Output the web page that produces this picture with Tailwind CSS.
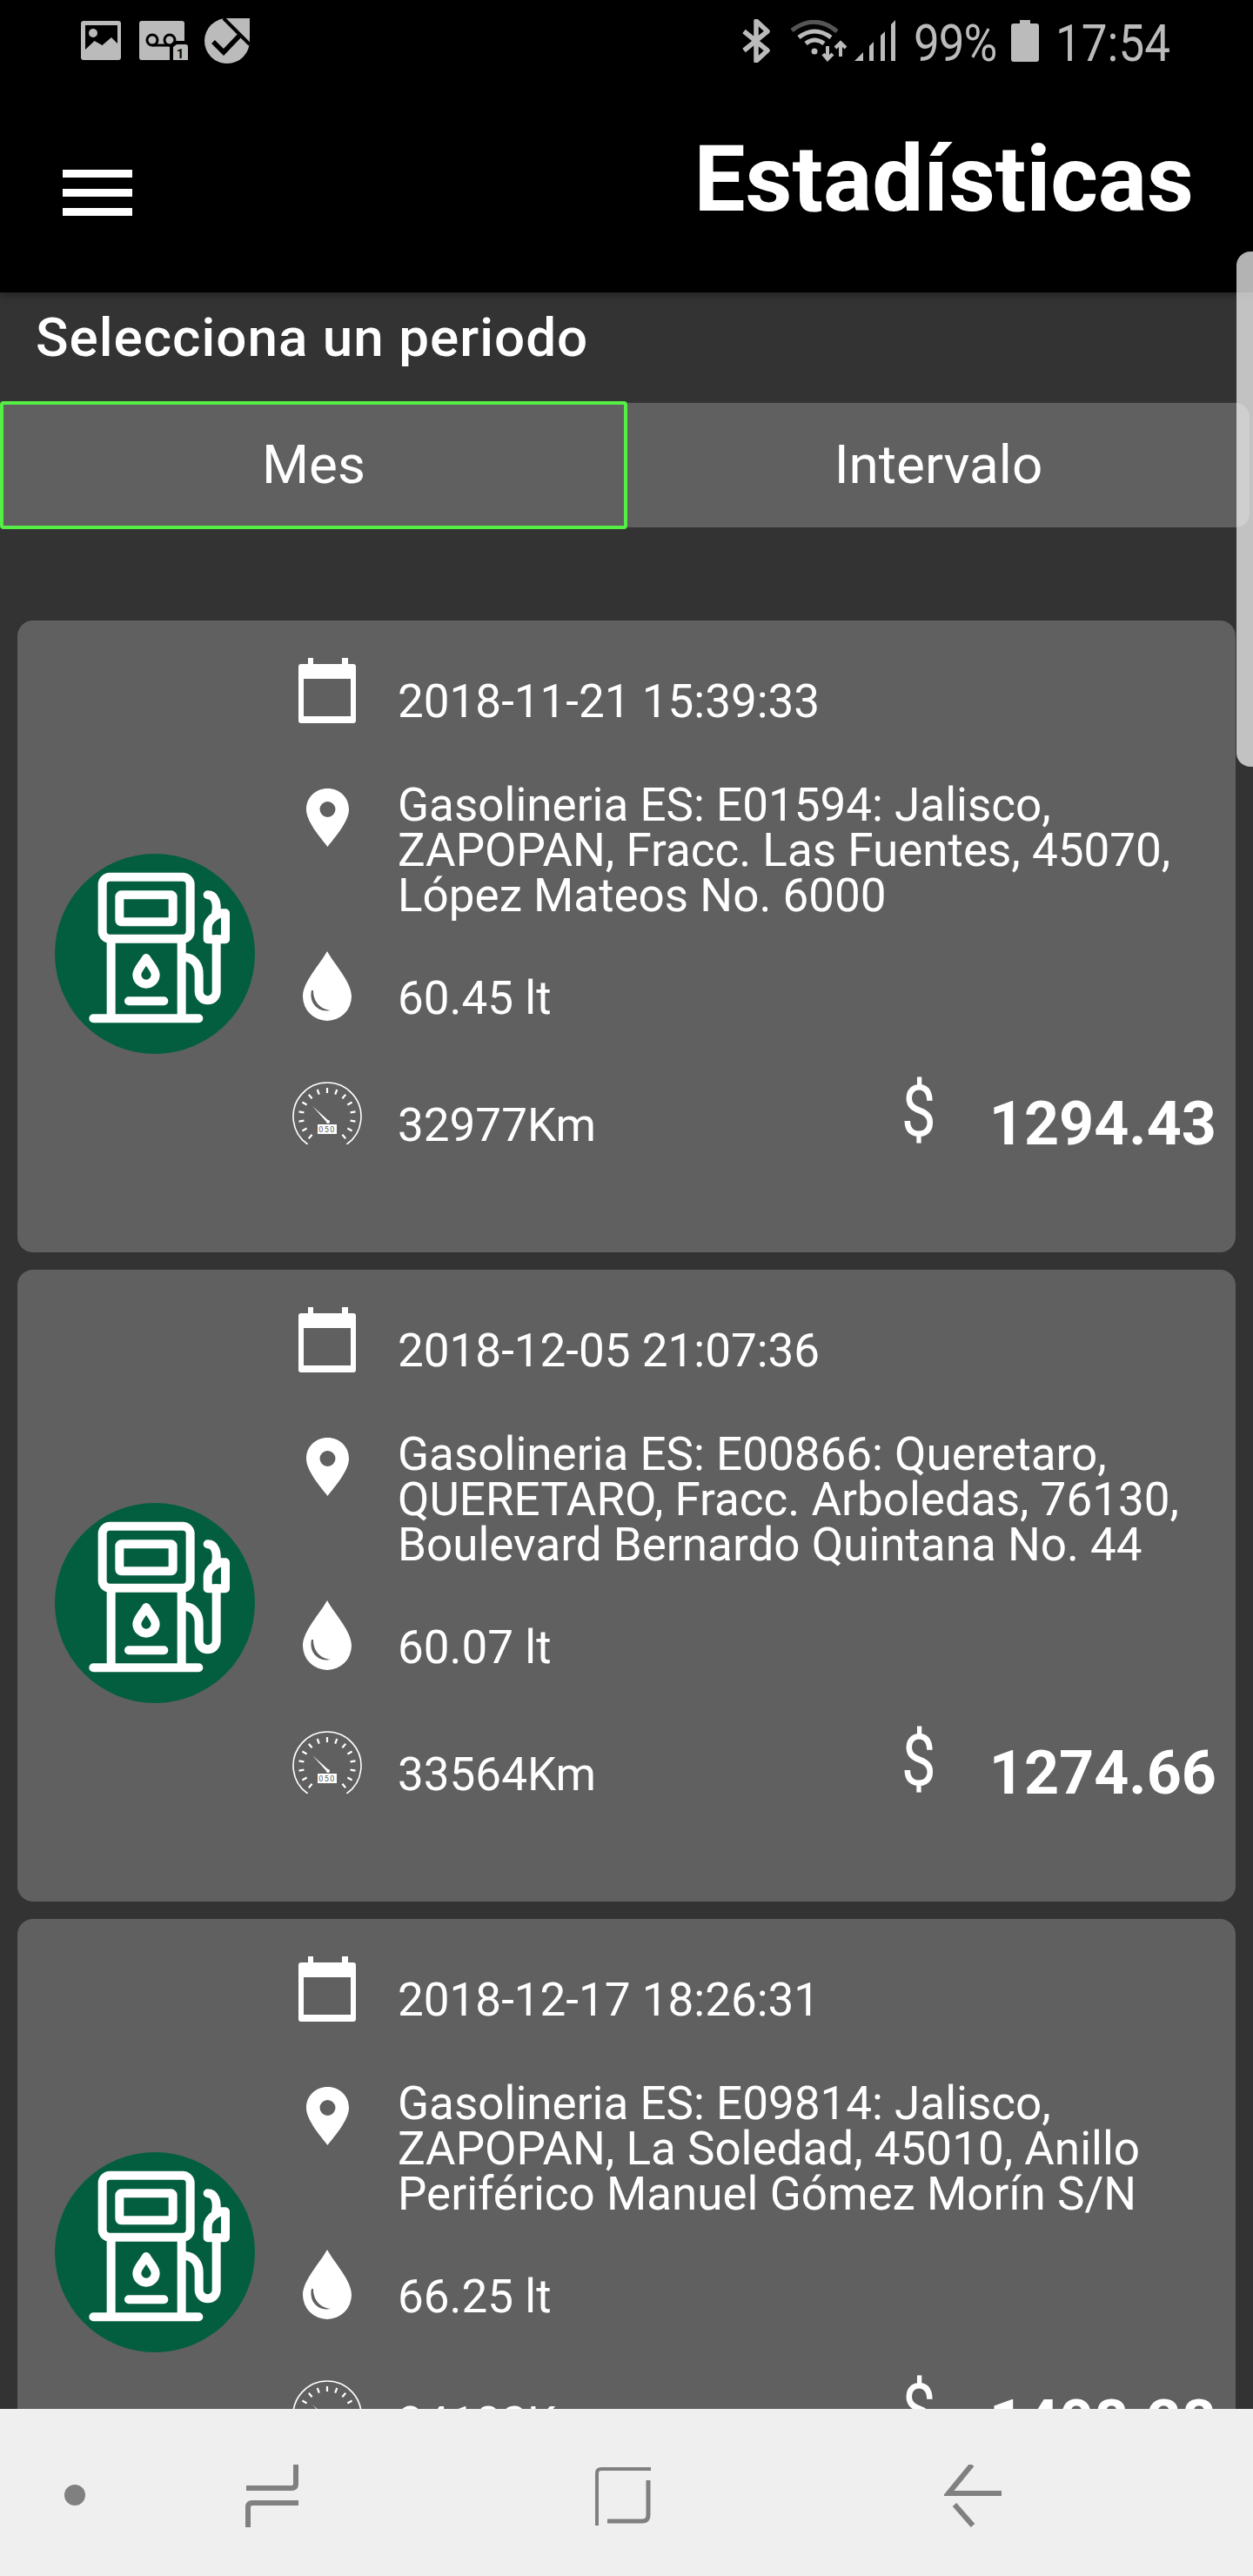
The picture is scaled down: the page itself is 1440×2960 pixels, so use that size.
<!DOCTYPE html>
<html lang="es">
<head>
  <meta charset="UTF-8">
  <title>Estadísticas</title>
  <script src="https://cdn.jsdelivr.net/npm/@tailwindcss/browser@4"></script>
</head>
<body class="bg-[#333333] font-['Roboto',sans-serif] text-white">
  <!-- iconos compartidos -->
  <svg class="hidden">
    <symbol id="calendar" viewBox="0 0 66 75">
      <path fill="#fff" fill-rule="evenodd" d="M3 7h8V0h6v7h33V0h7v7h6a3 3 0 0 1 3 3v62a3 3 0 0 1-3 3H3a3 3 0 0 1-3-3V10a3 3 0 0 1 3-3zM6 24v43h54V24z"/>
    </symbol>
    <symbol id="pin" viewBox="0 0 49 67">
      <path fill="#fff" fill-rule="evenodd" d="M24.5 0C38 0 49 10 49 24 49 38 33 56 24.5 67 16 56 0 38 0 24 0 10 11 0 24.5 0zM24.5 15a9 9 0 1 0 0 18 9 9 0 0 0 0-18z"/>
    </symbol>
    <symbol id="drop" viewBox="0 0 56 80">
      <path fill="#fff" d="M28 0C20 15 0 35 0 52a28 28 0 0 0 56 0C56 35 36 15 28 0z"/>
      <path fill="#606060" d="M10 45C7 58 16 71 32 68 22 67 12 60 12 45z"/>
    </symbol>
    <symbol id="gauge" viewBox="0 0 80 72">
      <path fill="none" stroke="#fff" stroke-width="1.6" d="M17.7 72A39 39 0 1 1 62.3 72"/>
      <path fill="none" stroke="#fff" stroke-width="2.2" d="M40 13V7M49.2 14.6L51.3 9M30.8 14.6L28.7 9M57.4 19.3L61.2 14.7M22.6 19.3L18.8 14.7M63.4 26.5L68.6 23.5M16.6 26.5L11.4 23.5M66.6 35.3L72.5 34.3M13.4 35.3L7.5 34.3M66.6 44.7L72.5 45.7M13.4 44.7L7.5 45.7M63.4 53.5L68.6 56.5M16.6 53.5L11.4 56.5M57.4 60.7L61.2 65.3M22.6 60.7L18.8 65.3"/>
      <path fill="#fff" d="M23 28L42 45 40 47z"/>
      <circle cx="41" cy="46" r="2" fill="#fff"/>
      <rect x="29" y="49" width="22" height="11" fill="#fff"/>
      <text x="40" y="58" text-anchor="middle" font-size="9" letter-spacing="1.4" fill="#606060" font-family="Roboto">050</text>
    </symbol>
    <symbol id="pump" viewBox="70 65 690 690">
      <g fill="none" stroke="#fff" stroke-width="30" stroke-linecap="round" stroke-linejoin="round">
        <rect x="234" y="145" width="303" height="213" rx="26"/>
        <rect x="293" y="207" width="184" height="93" rx="6"/>
        <path d="M264 360V632M507 360V632M203 633H566M325 573H446"/>
        <path d="M385 425C370 450 353 465 353 482A32 32 0 0 0 417 482C417 465 400 450 385 425Z"/>
        <path d="M522 423C550 425 567 450 567 480V540A30 30 0 0 0 627 540V360"/>
        <path d="M597 360V320C597 295 620 280 640 270H658V360Z"/>
        <path d="M597 207C622 207 632 235 625 270"/>
      </g>
    </symbol>
  </svg>

  <div class="relative w-[1440px] h-[2960px] overflow-hidden flex flex-col">
    <!-- barra de estado + titulo -->
    <header class="h-[336px] shrink-0 bg-black shadow-[0_4px_8px_rgba(0,0,0,0.3)] z-10">
      <div class="flex justify-between items-start h-[72px] pt-[21px] pl-[93px] pr-[98px]">
        <div class="flex items-start gap-[21px]">
          <svg class="w-[46px] h-[45px] mt-[3px]" viewBox="0 0 46 45">
            <rect width="46" height="45" rx="3" fill="#bbb"/>
            <path fill="#000" d="M5 5H42V26L35 19 24.5 28 15.5 23 5 33Z"/>
            <circle cx="14" cy="14" r="5" fill="#bbb"/>
          </svg>
          <svg class="w-[56px] h-[45px] mt-[3px] -mr-[2px]" viewBox="0 0 56 45">
            <rect width="52" height="45" rx="3" fill="#bbb"/>
            <circle cx="15" cy="22" r="6" fill="none" stroke="#000" stroke-width="3"/>
            <circle cx="35" cy="22" r="6" fill="none" stroke="#000" stroke-width="3"/>
            <path d="M15 28H35" stroke="#000" stroke-width="3"/>
            <path d="M35 45V28L40 23H56V45Z" fill="#000"/>
            <path d="M39 45V30L43 27H53A3 3 0 0 1 56 30V45Z" fill="#bbb"/>
            <text x="47" y="43" text-anchor="middle" font-size="15" font-weight="700" fill="#000" font-family="Roboto">1</text>
          </svg>
          <svg class="w-[52px] h-[52px]" viewBox="0 0 52 52">
            <circle cx="26" cy="26" r="26" fill="#bbb"/>
            <path d="M27 0H52V24Z" fill="#bbb"/>
            <path d="M22 0L52 30" stroke="#000" stroke-width="4"/>
            <path d="M10 27L22 39 42 18" fill="none" stroke="#000" stroke-width="5.5"/>
          </svg>
        </div>
        <div class="flex items-start text-[#bbbbbb]">
          <svg class="w-[32px] h-[50px] mt-[1px]" viewBox="0 0 32 50">
            <path d="M2 36L29 14 16 2V48L29 36 2 14" fill="none" stroke="#bbb" stroke-width="5.5" stroke-linejoin="round"/>
          </svg>
          <svg class="w-[66px] h-[48px] ml-[24px] mt-[2px]" viewBox="0 0 66 48">
            <g fill="none" stroke-width="5">
              <path stroke="#555" d="M1 12Q27-8 53 13"/>
              <path stroke="#bbb" d="M9 20Q27 6 46 20"/>
              <path stroke="#bbb" d="M17 27Q27 19 38 27"/>
              <path stroke="#bbb" stroke-width="4" d="M42 30V43M37 39L42 45 48 39M57 42V27M51 32L57 26 63 32"/>
            </g>
            <circle cx="27" cy="36" r="3.5" fill="#bbb"/>
          </svg>
          <svg class="w-[48px] h-[48px] ml-[7px] mt-[2px]" viewBox="0 0 48 48">
            <path fill="#bbb" d="M0 47L10 37V47ZM17 30L22 25V47H17ZM30 18L35 13V47H30ZM42 5L47 0V47H42Z"/>
          </svg>
          <span class="text-[53px] leading-[52px] ml-[20px] mt-[3px] w-[94px] origin-left scale-y-[1.12] tracking-[-1px] whitespace-nowrap">99%</span>
          <svg class="w-[32px] h-[48px] ml-[18px] mt-[2px]" viewBox="0 0 32 48">
            <path fill="#bbb" d="M10 0H22V4H29A3 3 0 0 1 32 7V45A3 3 0 0 1 29 48H3A3 3 0 0 1 0 45V7A3 3 0 0 1 3 4H10Z"/>
          </svg>
          <span class="text-[53px] leading-[52px] ml-[19px] mt-[3px] w-[129px] scale-y-[1.12] whitespace-nowrap">17:54</span>
        </div>
      </div>
      <div class="flex justify-between items-start pl-[72px] pr-[68px]">
        <div class="flex flex-col gap-[13px] mt-[123px]">
          <span class="block w-[80px] h-[9px] bg-white"></span>
          <span class="block w-[80px] h-[9px] bg-white"></span>
          <span class="block w-[80px] h-[9px] bg-white"></span>
        </div>
        <h1 class="text-[105px] leading-[105px] font-bold mt-[82px]">Estadísticas</h1>
      </div>
    </header>

    <main class="flex-1 min-h-0 overflow-hidden">
      <p class="pl-[41px] pt-[22px] text-[62px] leading-[60px] font-medium tracking-[1px]">Selecciona un periodo</p>

      <div class="flex mt-[43px] h-[147px] items-center">
        <button class="w-[721px] h-[147px] pb-[2px] bg-[#606060] border-[4px] border-[#55ee44] rounded-[4px] text-[62px]">Mes</button>
        <button class="w-[715px] h-[143px] pb-[2px] bg-[#606060] rounded-r-[16px] text-[62px]">Intervalo</button>
      </div>

      <div class="flex flex-col gap-[20px] mt-[105px] px-[20px]">
        <article class="flex h-[726px] bg-[#606060] rounded-[18px] pl-[43px]">
          <div class="w-[230px] h-[230px] shrink-0 mt-[268px] rounded-full bg-[#035e3f] flex items-center justify-center">
            <svg class="w-[230px] h-[230px]"><use href="#pump"/></svg>
          </div>
          <div class="flex-1 ml-[43px] pt-[2px] pr-[22px] text-[53px] leading-[52px]">
            <div class="flex items-center h-[182px]">
              <div class="w-[80px] flex justify-center"><svg class="w-[66px] h-[75px] mb-[26px]"><use href="#calendar"/></svg></div>
              <span class="ml-[41px]">2018-11-21 15:39:33</span>
            </div>
            <div class="flex items-center h-[160px]">
              <div class="w-[80px] flex justify-center"><svg class="w-[49px] h-[67px] mb-[76px]"><use href="#pin"/></svg></div>
              <span class="ml-[41px] flex-1">Gasolineria ES: E01594: Jalisco, ZAPOPAN, Fracc. Las Fuentes, 45070, López Mateos No. 6000</span>
            </div>
            <div class="flex items-center h-[180px]">
              <div class="w-[80px] flex justify-center"><svg class="w-[56px] h-[80px] mb-[28px]"><use href="#drop"/></svg></div>
              <span class="ml-[41px]">60.45 lt</span>
            </div>
            <div class="flex items-center h-[112px]">
              <div class="w-[80px] flex justify-center"><svg class="w-[80px] h-[72px] mb-[28px]"><use href="#gauge"/></svg></div>
              <span class="ml-[41px] flex-1">32977Km</span>
              <span class="text-[81px] leading-[72px] mb-[30px] scale-x-[0.88]">$</span>
              <span class="ml-[58px] text-[70px] leading-[72px] mb-[4px] font-bold">1294.43</span>
            </div>
          </div>
        </article>

        <article class="flex h-[726px] bg-[#606060] rounded-[18px] pl-[43px]">
          <div class="w-[230px] h-[230px] shrink-0 mt-[268px] rounded-full bg-[#035e3f] flex items-center justify-center">
            <svg class="w-[230px] h-[230px]"><use href="#pump"/></svg>
          </div>
          <div class="flex-1 ml-[43px] pt-[2px] pr-[22px] text-[53px] leading-[52px]">
            <div class="flex items-center h-[182px]">
              <div class="w-[80px] flex justify-center"><svg class="w-[66px] h-[75px] mb-[26px]"><use href="#calendar"/></svg></div>
              <span class="ml-[41px]">2018-12-05 21:07:36</span>
            </div>
            <div class="flex items-center h-[160px]">
              <div class="w-[80px] flex justify-center"><svg class="w-[49px] h-[67px] mb-[76px]"><use href="#pin"/></svg></div>
              <span class="ml-[41px] flex-1">Gasolineria ES: E00866: Queretaro, QUERETARO, Fracc. Arboledas, 76130, Boulevard Bernardo Quintana No. 44</span>
            </div>
            <div class="flex items-center h-[180px]">
              <div class="w-[80px] flex justify-center"><svg class="w-[56px] h-[80px] mb-[28px]"><use href="#drop"/></svg></div>
              <span class="ml-[41px]">60.07 lt</span>
            </div>
            <div class="flex items-center h-[112px]">
              <div class="w-[80px] flex justify-center"><svg class="w-[80px] h-[72px] mb-[28px]"><use href="#gauge"/></svg></div>
              <span class="ml-[41px] flex-1">33564Km</span>
              <span class="text-[81px] leading-[72px] mb-[30px] scale-x-[0.88]">$</span>
              <span class="ml-[58px] text-[70px] leading-[72px] mb-[4px] font-bold">1274.66</span>
            </div>
          </div>
        </article>

        <article class="flex h-[726px] bg-[#606060] rounded-[18px] pl-[43px]">
          <div class="w-[230px] h-[230px] shrink-0 mt-[268px] rounded-full bg-[#035e3f] flex items-center justify-center">
            <svg class="w-[230px] h-[230px]"><use href="#pump"/></svg>
          </div>
          <div class="flex-1 ml-[43px] pt-[2px] pr-[22px] text-[53px] leading-[52px]">
            <div class="flex items-center h-[182px]">
              <div class="w-[80px] flex justify-center"><svg class="w-[66px] h-[75px] mb-[26px]"><use href="#calendar"/></svg></div>
              <span class="ml-[41px]">2018-12-17 18:26:31</span>
            </div>
            <div class="flex items-center h-[160px]">
              <div class="w-[80px] flex justify-center"><svg class="w-[49px] h-[67px] mb-[76px]"><use href="#pin"/></svg></div>
              <span class="ml-[41px] flex-1">Gasolineria ES: E09814: Jalisco, ZAPOPAN, La Soledad, 45010, Anillo Periférico Manuel Gómez Morín S/N</span>
            </div>
            <div class="flex items-center h-[180px]">
              <div class="w-[80px] flex justify-center"><svg class="w-[56px] h-[80px] mb-[28px]"><use href="#drop"/></svg></div>
              <span class="ml-[41px]">66.25 lt</span>
            </div>
            <div class="flex items-center h-[112px]">
              <div class="w-[80px] flex justify-center"><svg class="w-[80px] h-[72px] mb-[28px]"><use href="#gauge"/></svg></div>
              <span class="ml-[41px] flex-1">34102Km</span>
              <span class="text-[81px] leading-[72px] mb-[30px] scale-x-[0.88]">$</span>
              <span class="ml-[58px] text-[70px] leading-[72px] mb-[4px] font-bold">1408.28</span>
            </div>
          </div>
        </article>
      </div>
    </main>

    <!-- barra de navegacion -->
    <nav class="h-[192px] shrink-0 bg-[#efefef] z-10 flex items-start pl-[74px] pt-[64px]">
      <span class="block w-[24px] h-[24px] mt-[23px] rounded-full bg-[#808080]"></span>
      <svg class="w-[66px] h-[72px] ml-[183px]" viewBox="0 0 66 72">
        <path d="M59 0V22Q59 27 54 27H2M62 44H9Q4 44 4 49V72" fill="none" stroke="#808080" stroke-width="6"/>
      </svg>
      <svg class="w-[66px] h-[72px] ml-[336px]" viewBox="0 0 66 72">
        <path d="M65 5H8Q3 5 3 10V70" fill="none" stroke="#808080" stroke-width="4"/>
        <path d="M62 18V58Q62 65 55 65H15" fill="none" stroke="#808080" stroke-width="5"/>
      </svg>
      <svg class="w-[66px] h-[72px] ml-[336px]" viewBox="0 0 66 72">
        <path d="M32 0L5 33H66M12 46L33 70" fill="none" stroke="#808080" stroke-width="6"/>
      </svg>
    </nav>

    <!-- indicador de scroll sobre el contenido -->
    <div class="absolute top-[289px] right-0 w-[19px] h-[592px] bg-white/70 rounded-l-[16px] z-20"></div>
  </div>
</body>
</html>
